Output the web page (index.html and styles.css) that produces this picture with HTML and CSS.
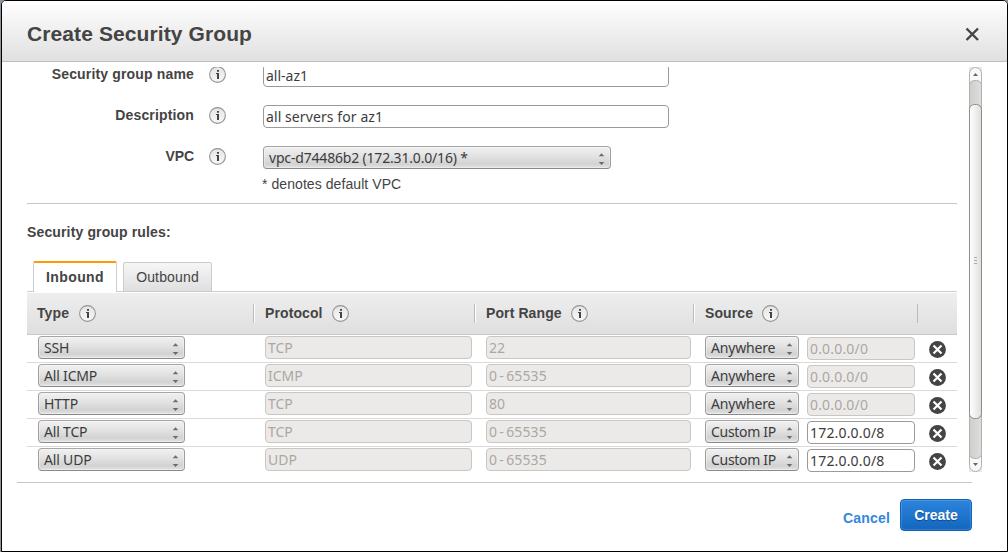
FILE: index.html
```html
<!DOCTYPE html>
<html lang="en">
<head>
<meta charset="utf-8">
<title>Create Security Group</title>
<link rel="stylesheet" href="styles.css">
</head>
<body>
<svg class="defs" aria-hidden="true">
  <defs>
    <linearGradient id="ig" x1="0" y1="0" x2="0" y2="1"><stop offset="0" stop-color="#e4e4e4"/><stop offset="1" stop-color="#f8f8f8"/></linearGradient>
    <symbol id="info" viewBox="0 0 17 17"><circle cx="8.5" cy="8.5" r="7.9" fill="url(#ig)" stroke="#959595" stroke-width="1.1"/><path d="M8 4h2v1.700H8zM7 7h3v6H8V8H7z" fill="#444"/></symbol>
    <symbol id="remove" viewBox="0 0 17 17"><circle cx="8.5" cy="8.5" r="8.4" fill="#444"/><path d="M4.500 4.500l8 8M12.500 4.500l-8 8" stroke="#fff" stroke-width="2.200"/></symbol>
    <symbol id="spin" viewBox="0 0 7 13"><path d="M.7 4.200L3.500 1.200l2.800 3zM.7 10l2.800 3 2.800-3z" fill="#6c6c6c"/></symbol>
  </defs>
</svg>
<div class="dialog">
  <header class="head">
    <h1 class="title">Create Security Group</h1>
    <svg class="close" viewBox="0 0 14 14"><path d="M1.500 1.500l11.500 11.500M13 1.500l-11.500 11.500" stroke="#444" stroke-width="2.4" fill="none"/></svg>
  </header>
  <div class="body">
    <main class="content">
      <div class="form">
        <div class="field"><label class="label">Security group name</label><svg class="info"><use href="#info"/></svg><div class="input wide">all-az1</div></div>
        <div class="field"><label class="label">Description</label><svg class="info"><use href="#info"/></svg><div class="input wide desc">all servers for az1</div></div>
        <div class="field"><label class="label short">VPC</label><svg class="info"><use href="#info"/></svg><div class="select vpc">vpc-d74486b2 (172.31.0.0/16) *<svg class="spin"><use href="#spin"/></svg></div></div>
        <p class="note">* denotes default VPC</p>
      </div>
      <h2 class="rules-title">Security group rules:</h2>
      <nav class="tabs"><div class="tab active">Inbound</div><div class="tab idle">Outbound</div></nav>
      <div class="thead">
        <div class="th">Type<svg class="info"><use href="#info"/></svg></div>
        <div class="th">Protocol<svg class="info"><use href="#info"/></svg></div>
        <div class="th">Port Range<svg class="info"><use href="#info"/></svg></div>
        <div class="th">Source<svg class="info"><use href="#info"/></svg></div>
        <div class="th"></div>
      </div>
      <div class="row">
        <div class="select">SSH<svg class="spin"><use href="#spin"/></svg></div><div class="input off">TCP</div><div class="input off port">22</div>
        <div class="select src">Anywhere<svg class="spin"><use href="#spin"/></svg></div><div class="input off ip">0.0.0.0/0</div><svg class="remove"><use href="#remove"/></svg>
      </div>
      <div class="row">
        <div class="select">All ICMP<svg class="spin"><use href="#spin"/></svg></div><div class="input off">ICMP</div><div class="input off port range">0 - 65535</div>
        <div class="select src">Anywhere<svg class="spin"><use href="#spin"/></svg></div><div class="input off ip">0.0.0.0/0</div><svg class="remove"><use href="#remove"/></svg>
      </div>
      <div class="row">
        <div class="select">HTTP<svg class="spin"><use href="#spin"/></svg></div><div class="input off">TCP</div><div class="input off port">80</div>
        <div class="select src">Anywhere<svg class="spin"><use href="#spin"/></svg></div><div class="input off ip">0.0.0.0/0</div><svg class="remove"><use href="#remove"/></svg>
      </div>
      <div class="row">
        <div class="select">All TCP<svg class="spin"><use href="#spin"/></svg></div><div class="input off">TCP</div><div class="input off port range">0 - 65535</div>
        <div class="select src custom">Custom IP<svg class="spin"><use href="#spin"/></svg></div><div class="input ip">172.0.0.0/8</div><svg class="remove"><use href="#remove"/></svg>
      </div>
      <div class="row last">
        <div class="select">All UDP<svg class="spin"><use href="#spin"/></svg></div><div class="input off">UDP</div><div class="input off port range">0 - 65535</div>
        <div class="select src custom">Custom IP<svg class="spin"><use href="#spin"/></svg></div><div class="input ip">172.0.0.0/8</div><svg class="remove"><use href="#remove"/></svg>
      </div>
    </main>
    <svg class="scroll" viewBox="0 0 13 405">
      <defs><linearGradient id="th"><stop offset="0" stop-color="#fff"/><stop offset=".3" stop-color="#f6f6f5"/><stop offset="1" stop-color="#dededc"/></linearGradient>
      <linearGradient id="tr"><stop offset="0" stop-color="#cfcecc"/><stop offset="1" stop-color="#dfdedc"/></linearGradient></defs>
      <rect width="13" height="405" fill="#e9e8e6"/>
      <rect x=".5" y=".5" width="12" height="404" rx="6" fill="#f8f8f7" stroke="#b3b1ae"/>
      <rect x=".5" y="13.500" width="12" height="378" rx="5" fill="url(#tr)" stroke="#b3b1ae"/>
      <rect x=".5" y="37.500" width="12" height="314" rx="5" fill="url(#th)" stroke="#8e8c89"/>
      <path d="M4 9l2.500-3L9 9zM4 396l2.500 3L9 396z" fill="#666"/>
      <path d="M5 190.500h3M5 193.500h3M5 196.500h3" stroke="#aaa"/>
    </svg>
  </div>
  <footer class="foot"><a class="cancel">Cancel</a><div class="create">Create</div></footer>
</div>
</body>
</html>
```
FILE: styles.css
```css
* { box-sizing: border-box; }
body { margin: 0; width: 1008px; height: 552px; overflow: hidden; background: #8d95a0; padding-left: 1px; font: 14px "Liberation Sans", Arial, sans-serif; color: #444; }
.defs { display: block; width: 0; height: 0; }
.dialog { width: 1007px; height: 552px; border: 1px solid #000; border-radius: 5px 5px 0 0; background: #fff; overflow: hidden; }
.head { height: 61px; border-bottom: 1px solid #bfbfbf; background: linear-gradient(#fff, #e0e0e0); display: flex; align-items: center; justify-content: space-between; padding: 5px 28px 0 25px; }
.title { margin: 0; font-size: 21px; line-height: 24px; font-weight: bold; letter-spacing: .1px; }
.close { width: 14px; height: 14px; margin-top: 1px; }
.body { height: 405px; margin: 5px 25px 0 25px; display: flex; justify-content: space-between; overflow: hidden; }
.content { width: 930px; height: 405px; overflow: hidden; }
.form { height: 140px; margin-top: -3px; border-bottom: 1px solid #c6c6c6; }
.field { height: 41px; display: flex; align-items: flex-start; }
.label { width: 167px; text-align: right; font-weight: bold; line-height: 16px; padding-top: 2px; letter-spacing: .16px; }
.short { letter-spacing: -.1px; }
.info { width: 17px; height: 17px; flex: none; }
.field .info { margin: 2px 37px 0 15px; }
.note { margin: -11px 0 0 235px; line-height: 16px; letter-spacing: .07px; }
.input, .select { height: 23px; border: 1px solid #9c9a98; border-radius: 4px; font: 14px/22px "Noto Sans", sans-serif; color: #3c3c3c; white-space: pre; background: #fff; padding-left: 2px; flex: none; }
.wide { width: 406px; }
.desc { letter-spacing: .09px; }
.select { width: 147px; padding: 0 5px; display: flex; justify-content: space-between; align-items: center; letter-spacing: -.18px; border-color: #a8a6a4 #a09e9c #8c8a88; background: linear-gradient(#f1f1f1, #e2e2e2 45%, #d2d2d2 80%, #e2e2e2); box-shadow: inset 0 0 0 1px rgba(255,255,255,.35); }
.vpc { width: 348px; }
.spin { width: 7px; height: 13px; margin-top: 1px; flex: none; }
.rules-title { margin: 20px 0 0; font-size: 14px; line-height: 16px; letter-spacing: .14px; }
.tabs { height: 32px; margin-top: 21px; display: flex; align-items: flex-end; gap: 6px; padding: 0 0 1px 6px; background: linear-gradient(#ccc, #ccc) 0 30px / 100% 1px no-repeat; }
.tab { width: 84px; height: 31px; text-align: center; border: 1px solid #ccc; border-radius: 2px 2px 0 0; line-height: 28px; letter-spacing: .15px; }
.active { border-top: 2px solid #f90; border-bottom: 0; font-weight: bold; letter-spacing: .4px; background: #fff; }
.idle { width: 89px; height: 30px; background: linear-gradient(#f6f6f6, #dfdfdf); }
.thead { height: 42px; border-bottom: 1px solid #c8c8c8; background: linear-gradient(#eee, #dfdfdf); display: grid; grid-template-columns: 228px 221px 219px 223px 39px; align-items: center; font-weight: bold; letter-spacing: .1px; }
.th { display: flex; align-items: center; gap: 9px; height: 19px; padding-left: 11px; line-height: 17px; box-shadow: inset 1px 0 #fff; border-left: 1px solid #bbb; margin-left: -2px; }
.th:first-child { margin: 0; padding-left: 10px; gap: 10px; border: 0; box-shadow: none; }
.th:last-child { margin-left: -1px; box-shadow: none; }
.row { height: 28px; border-bottom: 1px solid #dadada; display: grid; grid-template-columns: 227px 221px 219px 102px 122px 17px; align-items: start; padding: 1px 0 0 11px; }
.row.last { border-bottom: 0; }
.row .input { width: 207px; }
.row .port { width: 205px; }
.row .range { letter-spacing: .1px; word-spacing: -1.5px; }
.row .select.src { width: 94px; }
.row .custom { letter-spacing: -.3px; }
.row .ip { width: 108px; margin-top: 1px; letter-spacing: .18px; }
.row .off { background: #ebeae8; border-color: #c9c6c3; color: #aba7a3; }
.remove { width: 17px; height: 17px; margin-top: 5px; }
.scroll { width: 13px; height: 405px; flex: none; }
.foot { height: 79px; margin: 10px 35px 0 15px; border-top: 1px solid #c6c6c6; display: flex; justify-content: flex-end; align-items: flex-start; gap: 10px; padding-top: 16px; font-weight: bold; }
.cancel { color: #3387dd; padding-top: 11px; line-height: 16px; letter-spacing: .2px; }
.create { width: 72px; height: 32px; border: 1px solid #1264b8; border-radius: 4px; background: linear-gradient(#2c84dc, #1366bd); color: #fff; text-align: center; line-height: 30px; text-shadow: 0 1px 1px #084a90; box-shadow: inset 0 0 1px 1px rgba(255,255,255,.15); }
```
